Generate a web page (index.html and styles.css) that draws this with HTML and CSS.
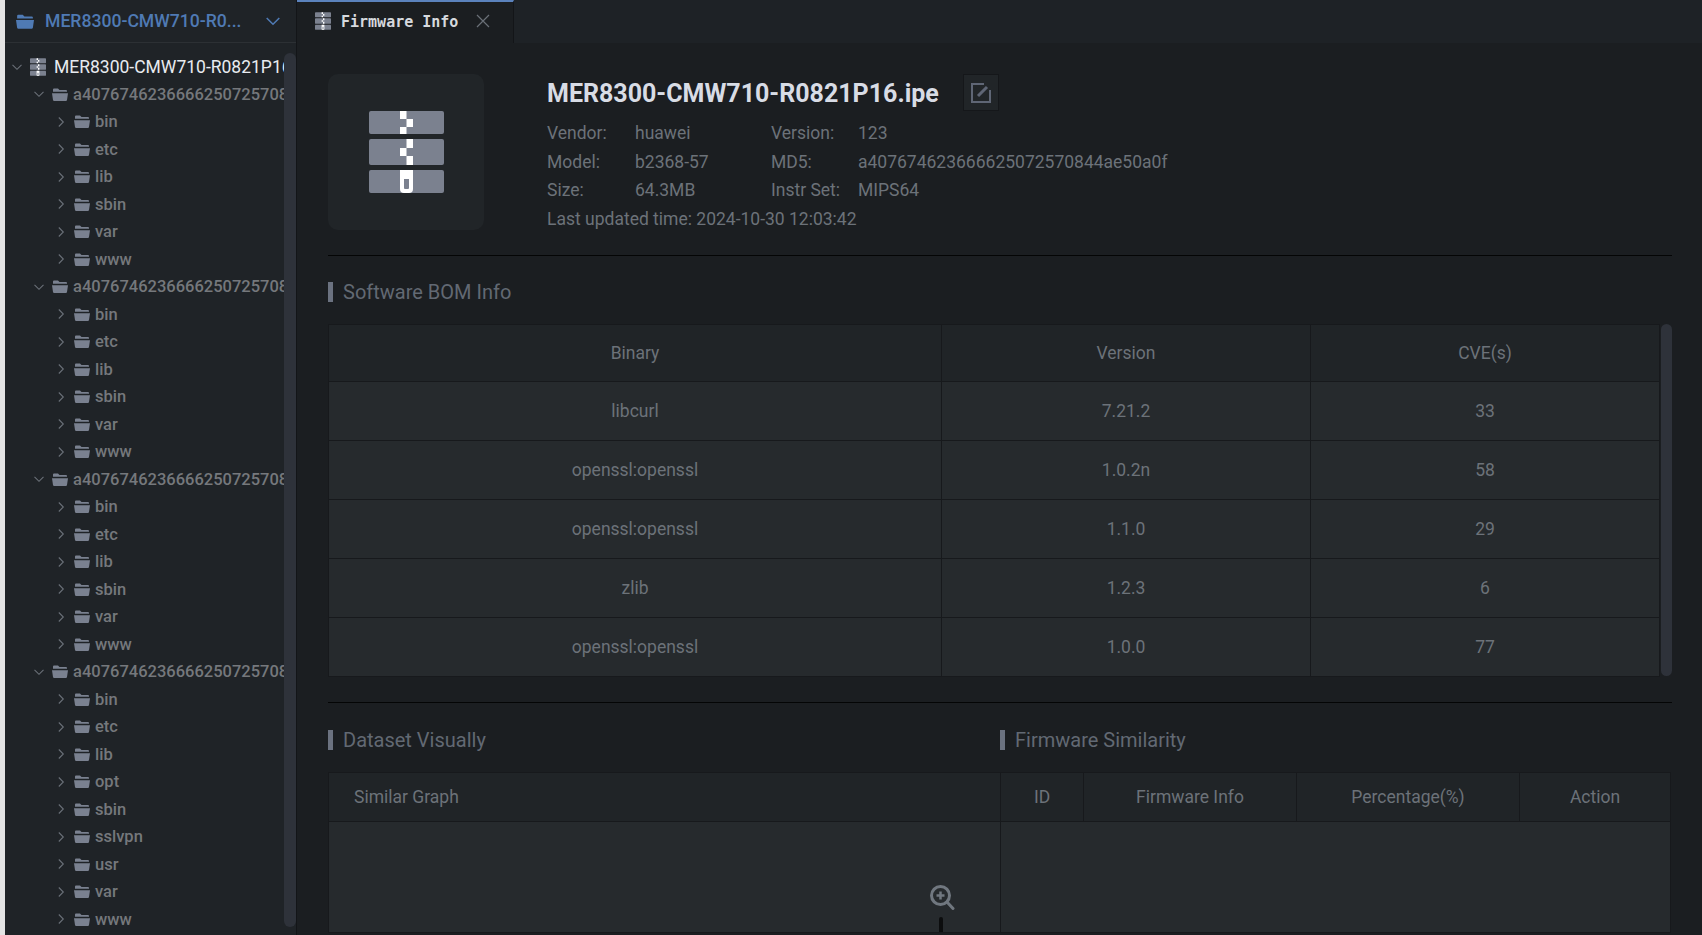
FILE: index.html
```html
<!DOCTYPE html>
<html lang="en">
<head>
<meta charset="utf-8">
<title>Firmware Info</title>
<link rel="stylesheet" href="styles.css">
</head>
<body>
<svg class="defs" width="0" height="0" aria-hidden="true">
  <symbol id="zip" viewBox="0 0 75 82">
    <rect x="0" y="0" width="75" height="23" rx="2" fill="#7b818f"/>
    <rect x="0" y="28" width="75" height="26" rx="2" fill="#7b818f"/>
    <rect x="0" y="59" width="75" height="23" rx="2" fill="#7b818f"/>
    <path fill="#fff" d="M31 0h6.500v8H44v8h-6.500v7H31v-7h6.500V8H31zM37.500 28H44v9h-6.500v8H44v9h-6.500v-9H31v-8h6.500z"/>
    <path fill="#fff" fill-rule="evenodd" d="M31 59h13v19a4 4 0 0 1-4 4h-5a4 4 0 0 1-4-4zM35 68v9a1 1 0 0 0 1 1h3a1 1 0 0 0 1-1v-9z"/>
  </symbol>
  <symbol id="folder" viewBox="0 0 16 13">
    <path d="M1 3V1.500A1 1 0 0 1 2 .5h4l1.500 1.500H14a1 1 0 0 1 1 1V3.800H1z"/>
    <path d="M0 5.200h16L15 12a1.200 1.200 0 0 1-1.200 1H2.200A1.200 1.200 0 0 1 1 12z"/>
  </symbol>
  <symbol id="down" viewBox="0 0 10 10">
    <path d="M.5 2.800 5 7.300l4.500-4.500" fill="none" stroke="currentColor" stroke-width="1.100"/>
  </symbol>
  <symbol id="right" viewBox="0 0 10 10">
    <path d="M2.800.5 7.300 5 2.800 9.500" fill="none" stroke="currentColor" stroke-width="1.100"/>
  </symbol>
</svg>

<div class="app">
  <div class="strip"></div>

  <aside class="sidebar">
    <header class="side-head">
      <svg class="side-folder"><use href="#folder"/></svg>
      <span class="side-name">MER8300-CMW710-R0...</span>
      <svg class="side-chev"><use href="#down"/></svg>
    </header>
    <div class="side-body">
      <ul class="tree">
        <li class="row lvl0"><svg class="chev"><use href="#down"/></svg><svg class="zip-sm"><use href="#zip"/></svg><span class="root-name">MER8300-CMW710-R0821P16.ipe</span></li>

        <li class="row lvl1"><svg class="chev"><use href="#down"/></svg><svg class="fold"><use href="#folder"/></svg><span class="name">a407674623666625072570844ae50a0f</span></li>
        <li class="row lvl2"><svg class="chev"><use href="#right"/></svg><svg class="fold"><use href="#folder"/></svg><span class="name">bin</span></li>
        <li class="row lvl2"><svg class="chev"><use href="#right"/></svg><svg class="fold"><use href="#folder"/></svg><span class="name">etc</span></li>
        <li class="row lvl2"><svg class="chev"><use href="#right"/></svg><svg class="fold"><use href="#folder"/></svg><span class="name">lib</span></li>
        <li class="row lvl2"><svg class="chev"><use href="#right"/></svg><svg class="fold"><use href="#folder"/></svg><span class="name">sbin</span></li>
        <li class="row lvl2"><svg class="chev"><use href="#right"/></svg><svg class="fold"><use href="#folder"/></svg><span class="name">var</span></li>
        <li class="row lvl2"><svg class="chev"><use href="#right"/></svg><svg class="fold"><use href="#folder"/></svg><span class="name">www</span></li>

        <li class="row lvl1"><svg class="chev"><use href="#down"/></svg><svg class="fold"><use href="#folder"/></svg><span class="name">a407674623666625072570844ae50a0f</span></li>
        <li class="row lvl2"><svg class="chev"><use href="#right"/></svg><svg class="fold"><use href="#folder"/></svg><span class="name">bin</span></li>
        <li class="row lvl2"><svg class="chev"><use href="#right"/></svg><svg class="fold"><use href="#folder"/></svg><span class="name">etc</span></li>
        <li class="row lvl2"><svg class="chev"><use href="#right"/></svg><svg class="fold"><use href="#folder"/></svg><span class="name">lib</span></li>
        <li class="row lvl2"><svg class="chev"><use href="#right"/></svg><svg class="fold"><use href="#folder"/></svg><span class="name">sbin</span></li>
        <li class="row lvl2"><svg class="chev"><use href="#right"/></svg><svg class="fold"><use href="#folder"/></svg><span class="name">var</span></li>
        <li class="row lvl2"><svg class="chev"><use href="#right"/></svg><svg class="fold"><use href="#folder"/></svg><span class="name">www</span></li>

        <li class="row lvl1"><svg class="chev"><use href="#down"/></svg><svg class="fold"><use href="#folder"/></svg><span class="name">a407674623666625072570844ae50a0f</span></li>
        <li class="row lvl2"><svg class="chev"><use href="#right"/></svg><svg class="fold"><use href="#folder"/></svg><span class="name">bin</span></li>
        <li class="row lvl2"><svg class="chev"><use href="#right"/></svg><svg class="fold"><use href="#folder"/></svg><span class="name">etc</span></li>
        <li class="row lvl2"><svg class="chev"><use href="#right"/></svg><svg class="fold"><use href="#folder"/></svg><span class="name">lib</span></li>
        <li class="row lvl2"><svg class="chev"><use href="#right"/></svg><svg class="fold"><use href="#folder"/></svg><span class="name">sbin</span></li>
        <li class="row lvl2"><svg class="chev"><use href="#right"/></svg><svg class="fold"><use href="#folder"/></svg><span class="name">var</span></li>
        <li class="row lvl2"><svg class="chev"><use href="#right"/></svg><svg class="fold"><use href="#folder"/></svg><span class="name">www</span></li>

        <li class="row lvl1"><svg class="chev"><use href="#down"/></svg><svg class="fold"><use href="#folder"/></svg><span class="name">a407674623666625072570844ae50a0f</span></li>
        <li class="row lvl2"><svg class="chev"><use href="#right"/></svg><svg class="fold"><use href="#folder"/></svg><span class="name">bin</span></li>
        <li class="row lvl2"><svg class="chev"><use href="#right"/></svg><svg class="fold"><use href="#folder"/></svg><span class="name">etc</span></li>
        <li class="row lvl2"><svg class="chev"><use href="#right"/></svg><svg class="fold"><use href="#folder"/></svg><span class="name">lib</span></li>
        <li class="row lvl2"><svg class="chev"><use href="#right"/></svg><svg class="fold"><use href="#folder"/></svg><span class="name">opt</span></li>
        <li class="row lvl2"><svg class="chev"><use href="#right"/></svg><svg class="fold"><use href="#folder"/></svg><span class="name">sbin</span></li>
        <li class="row lvl2"><svg class="chev"><use href="#right"/></svg><svg class="fold"><use href="#folder"/></svg><span class="name">sslvpn</span></li>
        <li class="row lvl2"><svg class="chev"><use href="#right"/></svg><svg class="fold"><use href="#folder"/></svg><span class="name">usr</span></li>
        <li class="row lvl2"><svg class="chev"><use href="#right"/></svg><svg class="fold"><use href="#folder"/></svg><span class="name">var</span></li>
        <li class="row lvl2"><svg class="chev"><use href="#right"/></svg><svg class="fold"><use href="#folder"/></svg><span class="name">www</span></li>
      </ul>
      <div class="side-bar"></div>
    </div>
  </aside>

  <section class="workspace">
    <nav class="tabs">
      <div class="tab">
        <svg class="zip-sm"><use href="#zip"/></svg>
        <span class="tab-label">Firmware Info</span>
        <svg class="tab-close" viewBox="0 0 14 14"><path d="M1 1l12 12M13 1 1 13" fill="none" stroke="currentColor" stroke-width="1.200"/></svg>
      </div>
    </nav>

    <main class="content">
      <div class="summary">
        <div class="zip-card"><svg class="zip-lg"><use href="#zip"/></svg></div>
        <div class="details">
          <div class="title-row">
            <h1 class="title">MER8300-CMW710-R0821P16.ipe</h1>
            <button class="edit" type="button" aria-label="Edit">
              <svg viewBox="0 0 20 20" class="edit-icon"><path d="M13 1H1v18h18V7" fill="none" stroke="currentColor" stroke-width="2"/><path d="M7 13 16 4" fill="none" stroke="currentColor" stroke-width="3"/></svg>
            </button>
          </div>
          <dl class="facts">
            <dt>Vendor:</dt><dd>huawei</dd><dt>Version:</dt><dd>123</dd>
            <dt>Model:</dt><dd>b2368-57</dd><dt>MD5:</dt><dd>a407674623666625072570844ae50a0f</dd>
            <dt>Size:</dt><dd>64.3MB</dd><dt>Instr Set:</dt><dd>MIPS64</dd>
          </dl>
          <div class="updated">Last updated time: 2024-10-30 12:03:42</div>
        </div>
      </div>

      <hr class="rule rule-first">

      <h2 class="section-title bom-title">Software BOM Info</h2>
      <div class="bom-wrap">
        <table class="grid bom">
          <colgroup><col class="c-bin"><col class="c-ver"><col class="c-cve"></colgroup>
          <thead><tr><th>Binary</th><th>Version</th><th>CVE(s)</th></tr></thead>
          <tbody>
            <tr><td>libcurl</td><td>7.21.2</td><td>33</td></tr>
            <tr><td>openssl:openssl</td><td>1.0.2n</td><td>58</td></tr>
            <tr><td>openssl:openssl</td><td>1.1.0</td><td>29</td></tr>
            <tr><td>zlib</td><td>1.2.3</td><td>6</td></tr>
            <tr><td>openssl:openssl</td><td>1.0.0</td><td>77</td></tr>
          </tbody>
        </table>
        <div class="bom-bar"></div>
      </div>

      <hr class="rule rule-second">

      <div class="lower">
        <div class="lower-col">
          <h2 class="section-title">Dataset Visually</h2>
          <div class="graph">
            <div class="graph-head">Similar Graph</div>
            <div class="graph-body">
              <svg class="zoom-icon" viewBox="0 0 26 26"><circle cx="11.500" cy="11.500" r="9" fill="none" stroke="currentColor" stroke-width="3"/><path d="M11.500 7.500v8M7.500 11.500h8" stroke="currentColor" stroke-width="2.500"/><path d="M18 18l6 6.500" stroke="currentColor" stroke-width="3" stroke-linecap="round"/></svg>
              <div class="zoom-track"></div>
            </div>
          </div>
        </div>
        <div class="lower-col">
          <h2 class="section-title">Firmware Similarity</h2>
          <div class="sim">
            <table class="grid sim-table">
              <colgroup><col class="c-id"><col class="c-info"><col class="c-pct"><col class="c-act"></colgroup>
              <thead><tr><th>ID</th><th>Firmware Info</th><th>Percentage(%)</th><th>Action</th></tr></thead>
            </table>
          </div>
        </div>
      </div>
    </main>
  </section>
</div>
</body>
</html>
```
FILE: styles.css
```css
* { box-sizing: border-box; }
html, body { margin: 0; height: 100%; }
body {
  background: #1b1e21;
  font-family: Roboto, "Liberation Sans", sans-serif;
  overflow: hidden;
}
.defs { position: absolute; }
.app { display: flex; width: 1702px; height: 935px; overflow: hidden; }
.strip { width: 5px; flex: none; background: #e4e4e4; }

/* sidebar */
.sidebar {
  width: 292px;
  flex: none;
  display: flex;
  flex-direction: column;
  background: #1f2327;
  border-right: 1px solid #131518;
}
.side-head {
  height: 43px;
  flex: none;
  display: flex;
  align-items: center;
  padding: 0 16px 0 11px;
  border-bottom: 1px solid #2c3034;
}
.side-folder { width: 18px; height: 15px; fill: #4f7ab4; flex: none; }
.side-name {
  margin-left: 11px;
  font-size: 17.600px;
  font-weight: 500;
  color: #4f7ab4;
  white-space: nowrap;
  flex: 1;
}
.side-chev { width: 14px; height: 14px; color: #4f7ab4; flex: none; }
.side-body { flex: 1; display: flex; min-height: 0; padding-top: 10px; }
.tree {
  list-style: none;
  margin: 0;
  padding: 0;
  width: 279px;
  flex: none;
  overflow: hidden;
}
.row { height: 27.500px; display: flex; align-items: center; white-space: nowrap; }
.lvl0 { padding-left: 7px; }
.lvl1 { padding-left: 29px; }
.lvl2 { padding-left: 51px; }
.chev { width: 10px; height: 10px; flex: none; color: #6a7078; }
.zip-sm { width: 16px; height: 18px; flex: none; }
.lvl0 .zip-sm { margin-left: 8px; }
.fold { width: 16px; height: 13px; flex: none; fill: #7a8190; margin-left: 8px; }
.root-name { margin-left: 8px; font-size: 17.500px; color: #e8ebf0; }
.name { margin-left: 5px; font-size: 16.500px; font-weight: 500; color: #75787c; }
.side-bar {
  width: 12px;
  flex: none;
  height: 874px;
  background: #2e323a;
  border-radius: 6px;
}

/* workspace */
.workspace { flex: 1; min-width: 0; display: flex; flex-direction: column; }
.tabs { height: 43px; flex: none; background: #1e2226; display: flex; }
.tab {
  width: 217px;
  display: flex;
  align-items: center;
  padding: 0 0 3px 18px;
  background: #1b1e21;
  border-top: 2px solid #5b82bc;
  border-right: 1px solid #131518;
}
.tab-label {
  margin: 2px 0 0 10px;
  font-family: "DejaVu Sans Mono", monospace;
  font-size: 15px;
  font-weight: 700;
  color: #d6d9de;
  white-space: nowrap;
}
.tab-close { width: 14px; height: 14px; margin-left: 18px; color: #6a7078; flex: none; }

.content { flex: 1; min-height: 0; padding: 31px 30px 0 31px; overflow: hidden; }
.summary { display: flex; height: 156px; }
.zip-card {
  width: 156px;
  height: 156px;
  flex: none;
  background: #212528;
  border-radius: 10px;
  display: flex;
  align-items: center;
  justify-content: center;
}
.zip-lg { width: 75px; height: 82px; }
.details { margin-left: 63px; }
.title-row { display: flex; align-items: center; height: 37px; }
.title { margin: 2px 0 0; font-size: 25px; font-weight: 700; color: #d8dce5; white-space: nowrap; }
.edit {
  width: 36px;
  height: 37px;
  margin-left: 24px;
  padding: 0;
  background: #212528;
  border: 1px solid #15171a;
  display: flex;
  align-items: center;
  justify-content: center;
  color: #5f6675;
}
.edit-icon { width: 20px; height: 20px; }
.facts {
  display: grid;
  grid-template-columns: 88px 136px 87px auto;
  grid-auto-rows: 28.500px;
  margin: 8px 0 0;
  font-size: 17.500px;
  line-height: 28.500px;
  color: #6c7279;
}
.facts dd { margin: 0; white-space: nowrap; }
.updated { font-size: 17.500px; line-height: 28.500px; color: #6c7279; white-space: nowrap; }

.rule { height: 1px; margin: 0; border: 0; background: #040505; }
.rule-first { margin-top: 25px; }
.rule-second { margin-top: 26px; }

.section-title {
  margin: 0;
  height: 20px;
  padding-left: 10px;
  border-left: 5px solid #6b7280;
  font-size: 20px;
  font-weight: 400;
  line-height: 20px;
  color: #626973;
  white-space: nowrap;
}
.bom-title { margin-top: 26px; }
.bom-wrap { display: flex; margin-top: 22px; height: 352px; }
.grid {
  border-collapse: collapse;
  table-layout: fixed;
  font-size: 17.500px;
  color: #6c7279;
  text-align: center;
}
.grid th, .grid td { border: 1px solid #17191c; font-weight: 400; padding: 0; }
.grid th { background: #202427; }
.grid td { background: #262a2d; }
.bom { width: 1331px; height: 352px; }
.bom th { height: 57px; }
.bom td { height: 59px; }
.c-bin { width: 613px; }
.c-ver { width: 369px; }
.c-cve { width: 349px; }
.bom-bar { width: 12px; margin-left: 1px; background: #2e323a; border-radius: 6px; }

.lower { display: grid; grid-template-columns: 1fr 1fr; margin-top: 27px; }
.lower-col > .section-title { margin-bottom: 22px; }
.graph {
  height: 161px;
  background: #262a2d;
  border: 1px solid #17191c;
  border-right: 0;
  display: flex;
  flex-direction: column;
}
.graph-head {
  height: 49px;
  flex: none;
  padding-left: 25px;
  display: flex;
  align-items: center;
  background: #202427;
  border-bottom: 1px solid #17191c;
  font-size: 17.500px;
  color: #6c7279;
}
.graph-body { flex: 1; position: relative; overflow: hidden; }
.zoom-icon { position: absolute; left: 600px; top: 62px; width: 26px; height: 26px; color: #70777f; }
.zoom-track { position: absolute; left: 610px; top: 95px; width: 4px; height: 30px; background: #0c0d0e; border-radius: 2px; }

.sim {
  height: 161px;
  width: 671px;
  background: #262a2d;
  border: 1px solid #17191c;
}
.sim-table { width: 670px; margin: -1px 0 0 -1px; }
.sim-table th { height: 49px; }
.c-id { width: 83px; }
.c-info { width: 213px; }
.c-pct { width: 223px; }
.c-act { width: 151px; }
```
